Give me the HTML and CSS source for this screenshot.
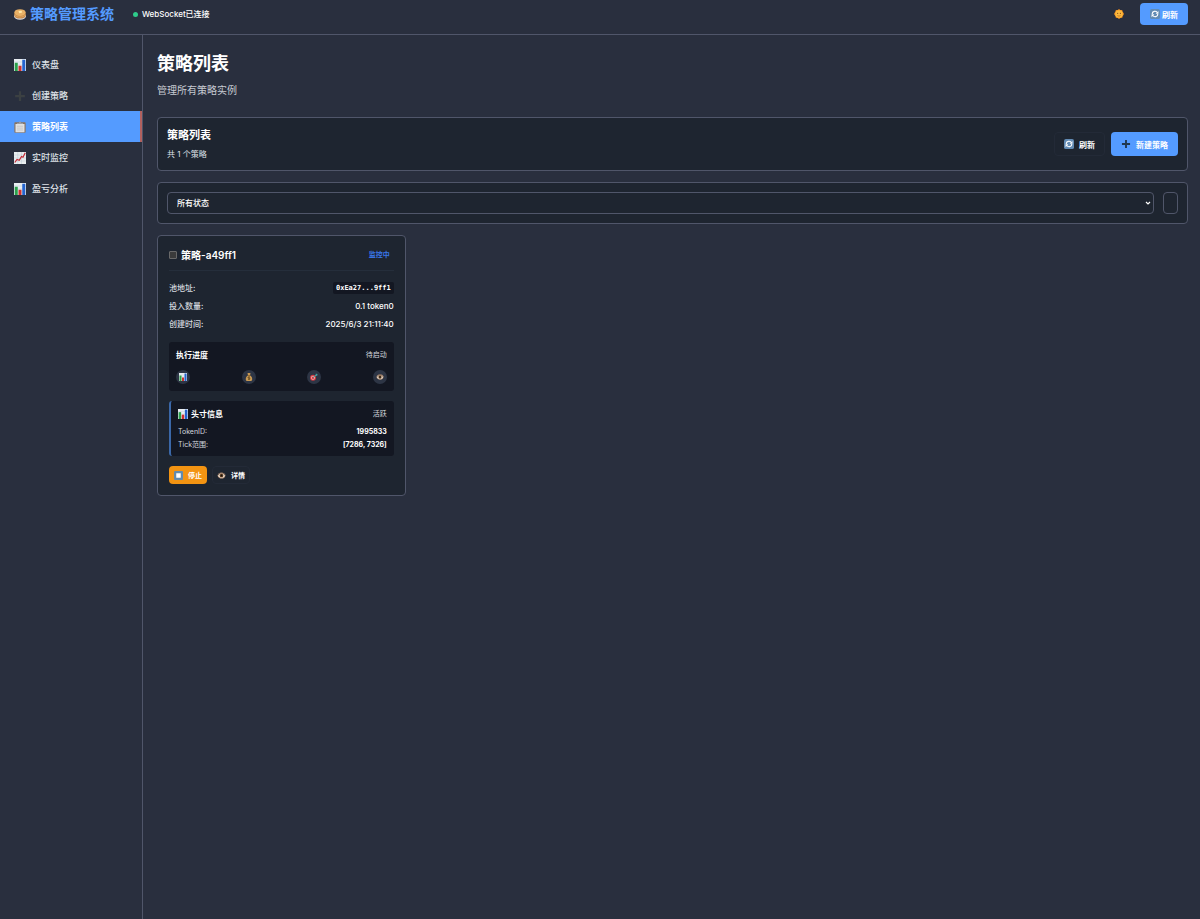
FILE: index.html
```html
<!DOCTYPE html>
<html lang="zh-CN">
<head>
  <meta charset="UTF-8">
  <meta name="viewport" content="width=device-width, initial-scale=1.0">
  <title>策略管理系统</title>
  <link rel="stylesheet" href="styles.css">
</head>
<body>
  <svg class="sprite" aria-hidden="true">
    <symbol id="chart" viewBox="0 0 16 16">
      <path fill="#e9eef2" d="M0 0h16v16H0z"/>
      <path stroke="#b8c6d2" stroke-width=".6" d="M0 4h16M0 8h16M0 12h16"/>
      <path fill="#2ba14b" d="M1 5h4v11H1z"/>
      <path fill="#cf3030" d="M6 9h4v7H6z"/>
      <path fill="#2464cf" d="M11 1h4v15h-4z"/>
    </symbol>
    <symbol id="trend" viewBox="0 0 16 16">
      <path fill="#e9eef0" d="M0 0h16v16H0z"/>
      <path stroke="#b8c6d2" stroke-width=".6" d="M0 4h16M0 8h16M0 12h16M5 0v16M10 0v16"/>
      <path fill="none" stroke="#c52b35" stroke-width="1.600" d="M1 14l3-4 3 1 3-5 2 1 3-6"/>
    </symbol>
    <symbol id="clipboard" viewBox="0 0 16 16">
      <rect x=".5" y="1.500" width="15" height="14" rx="1" fill="#8a7460"/>
      <path fill="#e0e0e0" d="M2 4h12v11H2z"/>
      <path stroke="#c2c2c4" d="M4 7h8M4 9.500h8M4 12h8"/>
      <path fill="#9b9ea4" d="M4 4V2.500h2.500L7 .5h2l.5 2H12V4z"/>
    </symbol>
    <symbol id="plus" viewBox="0 0 16 16">
      <path fill="currentColor" d="M6.500 1.500h3v5h5v3h-5v5h-3v-5h-5v-3h5z"/>
    </symbol>
    <symbol id="pancakes" viewBox="0 0 16 16">
      <ellipse cx="8" cy="11" rx="8" ry="4.500" fill="#d9dbe0"/>
      <path fill="#c48545" d="M.5 6h15v4c0 5.500-15 5.500-15 0z"/>
      <path fill="none" stroke="#e3ab62" stroke-width="1.200" d="M1 9c1 4 13 4 14 0"/>
      <ellipse cx="8" cy="6" rx="7.500" ry="4.500" fill="#e9b166"/>
      <path fill="#ffe9a8" d="M6 4l4-.5 1 2.500-4 1z"/>
    </symbol>
    <symbol id="sun" viewBox="0 0 16 16">
      <path fill="#ef8d20" d="M8 0l2 1.500 3 0 .8 2.500L16 8l-2 3-.8 3-3 .2L8 16l-2-1.800-3-.2-.8-3L0 8l2.200-4L3 1.500h3z"/>
      <circle cx="8" cy="8" r="6" fill="#fbb93c"/>
      <circle cx="5.800" cy="6.800" r="1" fill="#87471a"/>
      <circle cx="10.200" cy="6.800" r="1" fill="#87471a"/>
      <path fill="none" stroke="#a7541d" d="M5.500 10.500q2.500 2 5 0"/>
    </symbol>
    <symbol id="refresh" viewBox="0 0 16 16">
      <rect x="0" y="0" width="16" height="16" rx="3" fill="#628bb4"/>
      <path fill="none" stroke="#fff" stroke-width="1.800" d="M3.500 8c0-5 6-5.500 8-2.500M12.500 8c0 5-6 5.500-8 2.500"/>
      <path fill="#fff" d="M13.500 3v4.500H9zM2.500 13V8.500H7z"/>
    </symbol>
    <symbol id="stop" viewBox="0 0 16 16">
      <rect x="0" y="0" width="16" height="16" rx="2" fill="#638bad"/>
      <path fill="#fff" d="M4 4h8v8H4z"/>
    </symbol>
    <symbol id="money" viewBox="0 0 16 16">
      <path fill="#c99a55" d="M5 0h6l-1 5c5 2 6 10.500 2 11H4C0 15.500 1 7 6 5z"/>
      <path stroke="#79511e" stroke-width="1.200" d="M5.500 5h5"/>
      <path fill="none" stroke="#5b4218" stroke-width="1.400" d="M10 8.500c-1-1-4-1-4 .5s4 1 4 2.500-3 1.500-4 .5M8 7v7"/>
    </symbol>
    <symbol id="target" viewBox="0 0 16 16">
      <circle cx="6" cy="9.500" r="6" fill="#d3373f"/>
      <circle cx="6" cy="9.500" r="3.800" fill="#efc6c6"/>
      <circle cx="6" cy="9.500" r="2.500" fill="#d3373f"/>
      <path stroke="#41a6a6" stroke-width="2" d="M6.500 9l6.500-5.500"/>
      <path fill="#41a6a6" d="M11 4.500l1-4 1.500 2 2.500 1-3 2.500z"/>
    </symbol>
    <symbol id="eye" viewBox="0 0 16 16">
      <path fill="#c9a68a" d="M1 8c1-7 12-7 14-1 0 8-12 9-14 1z"/>
      <path fill="#f1eeea" d="M2.500 8.500c2-4.500 9-4.500 11 0-2 4-9 4-11 0z"/>
      <circle cx="8" cy="8" r="3.300" fill="#65401f"/>
      <circle cx="8" cy="8" r="1.600" fill="#161311"/>
      <path fill="none" stroke="#46362e" d="M2 7c3-5 9-5 12 0"/>
    </symbol>
  </svg>

  <header class="header">
    <div class="logo">
      <svg class="icon icon-lg"><use href="#pancakes"/></svg>
      <span>策略管理系统</span>
    </div>
    <div class="connection"><span class="dot"></span>WebSocket已连接</div>
    <div class="header-actions">
      <button class="theme-toggle" aria-label="切换主题"><svg class="icon"><use href="#sun"/></svg></button>
      <button class="btn btn-primary btn-header"><svg class="icon"><use href="#refresh"/></svg>刷新</button>
    </div>
  </header>

  <div class="layout">
    <nav class="sidebar">
      <a class="nav-item" href="#dashboard"><svg class="icon icon-lg"><use href="#chart"/></svg>仪表盘</a>
      <a class="nav-item" href="#create"><svg class="icon icon-lg plus-dim"><use href="#plus"/></svg>创建策略</a>
      <a class="nav-item active" href="#list"><svg class="icon icon-lg"><use href="#clipboard"/></svg>策略列表</a>
      <a class="nav-item" href="#monitor"><svg class="icon icon-lg"><use href="#trend"/></svg>实时监控</a>
      <a class="nav-item" href="#analysis"><svg class="icon icon-lg"><use href="#chart"/></svg>盈亏分析</a>
    </nav>

    <main class="content">
      <h1 class="page-title">策略列表</h1>
      <p class="page-subtitle">管理所有策略实例</p>

      <section class="panel toolbar">
        <div>
          <h2 class="toolbar-title">策略列表</h2>
          <p class="toolbar-count">共 1 个策略</p>
        </div>
        <div class="toolbar-actions">
          <button class="btn btn-ghost"><svg class="icon"><use href="#refresh"/></svg>刷新</button>
          <button class="btn btn-primary"><svg class="icon plus-dark"><use href="#plus"/></svg>新建策略</button>
        </div>
      </section>

      <section class="panel filters">
        <select class="field status" aria-label="状态筛选">
          <option>所有状态</option>
        </select>
        <input class="field search" type="text" aria-label="搜索策略">
      </section>

      <div class="strategy-grid">
        <article class="card">
          <div class="card-header">
            <input class="check" type="checkbox" id="strategy-a49ff1">
            <label class="card-title" for="strategy-a49ff1">策略-a49ff1</label>
            <span class="badge">监控中</span>
          </div>

          <dl class="details">
            <div class="row"><dt>池地址:</dt><dd class="address">0xEa27...9ff1</dd></div>
            <div class="row"><dt>投入数量:</dt><dd>0.1 token0</dd></div>
            <div class="row"><dt>创建时间:</dt><dd>2025/6/3 21:11:40</dd></div>
          </dl>

          <div class="box">
            <div class="box-header"><h3>执行进度</h3><span>待启动</span></div>
            <div class="steps">
              <span class="step"><svg><use href="#chart"/></svg></span>
              <span class="step"><svg><use href="#money"/></svg></span>
              <span class="step"><svg><use href="#target"/></svg></span>
              <span class="step"><svg><use href="#eye"/></svg></span>
            </div>
          </div>

          <div class="box position">
            <div class="box-header">
              <h3><svg class="icon"><use href="#chart"/></svg>头寸信息</h3>
              <span>活跃</span>
            </div>
            <dl class="position-info">
              <div class="row"><dt>TokenID:</dt><dd>1995833</dd></div>
              <div class="row"><dt>Tick范围:</dt><dd>[7286, 7326]</dd></div>
            </dl>
          </div>

          <div class="card-actions">
            <button class="btn btn-sm btn-warning"><svg class="icon"><use href="#stop"/></svg>停止</button>
            <button class="btn btn-sm btn-ghost"><svg class="icon"><use href="#eye"/></svg>详情</button>
          </div>
        </article>
      </div>
    </main>
  </div>
</body>
</html>
```
FILE: styles.css
```css
* {
  box-sizing: border-box;
  margin: 0;
  padding: 0;
}

body {
  display: flex;
  flex-direction: column;
  min-height: 100vh;
  background: #292f3e;
  color: #fff;
  font-family: Inter, "Noto Sans CJK SC", sans-serif;
  font-size: 8px;
  line-height: 12px;
}

button,
input,
select {
  font-family: inherit;
}

.sprite {
  display: none;
}

.icon {
  width: 10px;
  height: 10px;
  flex-shrink: 0;
}

.icon-lg {
  width: 12px;
  height: 12px;
}

.plus-dim {
  color: #3b4042;
}

.plus-dark {
  color: #20384f;
}

/* Header */
.header {
  display: flex;
  align-items: center;
  height: 35px;
  padding: 0 12px 6px 14px;
  border-bottom: 1px solid #50566a;
}

.logo {
  display: flex;
  align-items: center;
  gap: 4px;
  color: #549bff;
  font-size: 14px;
  font-weight: 700;
  line-height: 20px;
}

.connection {
  display: flex;
  align-items: center;
  gap: 4px;
  margin-left: 19px;
  font-weight: 500;
}

.dot {
  width: 5px;
  height: 5px;
  border-radius: 50%;
  background: #2ecc8b;
}

.header-actions {
  display: flex;
  align-items: center;
  gap: 16px;
  margin-left: auto;
}

.theme-toggle {
  display: flex;
  border: none;
  background: none;
  cursor: pointer;
}

/* Buttons */
.btn {
  display: flex;
  align-items: center;
  gap: 5px;
  height: 24px;
  padding: 0 9px;
  border: 1px solid transparent;
  border-radius: 4px;
  color: #fff;
  font-size: 8px;
  font-weight: 700;
  cursor: pointer;
}

.btn-header {
  gap: 2px;
  height: 22px;
}

.btn-primary {
  background: #549bff;
}

.btn-ghost {
  background: #1e2530;
  border-color: #232a37;
}

.btn-warning {
  background: #f39412;
}

.btn-sm {
  height: 18px;
  padding: 0 4px;
  font-size: 7px;
}

.btn-sm .icon {
  width: 9px;
  height: 9px;
}

/* Sidebar */
.layout {
  display: flex;
  flex: 1;
}

.sidebar {
  width: 143px;
  flex-shrink: 0;
  padding-top: 14px;
  border-right: 1px solid #50566a;
}

.nav-item {
  display: flex;
  align-items: center;
  gap: 6px;
  height: 31px;
  padding-left: 14px;
  color: #dfe2e8;
  font-size: 9px;
  font-weight: 500;
  text-decoration: none;
}

.nav-item.active {
  background: #549bff;
  border-right: 2px solid #b2615f;
  color: #fff;
  font-weight: 700;
}

/* Content */
.content {
  flex: 1;
  padding: 14px 12px 14px 14px;
}

.page-title {
  font-size: 18px;
  line-height: 30px;
}

.page-subtitle {
  margin-top: 4px;
  margin-bottom: 20px;
  color: #c6cad2;
  font-size: 10px;
  line-height: 14px;
}

.panel,
.card {
  background: #1e2530;
  border: 1px solid #50566a;
  border-radius: 4px;
}

.panel {
  display: flex;
  align-items: center;
  padding: 9px;
  margin-bottom: 11px;
}

.toolbar {
  justify-content: space-between;
}

.toolbar-title {
  font-size: 11px;
  line-height: 16px;
}

.toolbar-count {
  margin-top: 4px;
  color: #dfe2e8;
  line-height: 14px;
}

.toolbar-actions {
  display: flex;
  gap: 6px;
}

.filters {
  gap: 9px;
}

.field {
  flex: 1;
  height: 22px;
  padding: 0 9px;
  background: #1e2530;
  border: 1px solid #50566a;
  border-radius: 4px;
  color: #fff;
  font-size: 8px;
  font-weight: 500;
}

.status {
  appearance: none;
  background-image: url("data:image/svg+xml,%3Csvg xmlns='http://www.w3.org/2000/svg' viewBox='0 0 6 6'%3E%3Cpath d='M1 2l2 2 2-2' fill='none' stroke='white' stroke-width='1.2'/%3E%3C/svg%3E");
  background-repeat: no-repeat;
  background-position: right 2px center;
  background-size: 6px 6px;
}

.search {
  flex: 0 0 15px;
  padding: 0 5px;
  width: 15px;
}

/* Strategy card */
.strategy-grid {
  display: grid;
  grid-template-columns: repeat(auto-fill, minmax(220px, 1fr));
  gap: 12px;
}

.card {
  padding: 11px;
}

.card-header {
  display: flex;
  align-items: center;
  gap: 4px;
  height: 24px;
  padding-bottom: 8px;
  border-bottom: 1px solid #252e3b;
}

.check {
  appearance: none;
  width: 8px;
  height: 8px;
  background: #3b3b3b;
  border: 1px solid #696969;
  border-radius: 1px;
}

.card-title {
  font-size: 10px;
  font-weight: 600;
}

.badge {
  margin-left: auto;
  padding: 0 4px;
  color: #3976e8;
  font-size: 7px;
  font-weight: 700;
}

.details {
  display: grid;
  gap: 4px;
  margin: 10px 0 11px;
}

.row {
  display: flex;
  align-items: center;
  justify-content: space-between;
  height: 14px;
}

.row dt {
  color: #d4d8df;
  font-weight: 500;
}

.row dd {
  font-weight: 500;
}

.row .address {
  padding: 0 3px;
  background: #131722;
  border-radius: 2px;
  font-family: "DejaVu Sans Mono", monospace;
  font-size: 7px;
  font-weight: 700;
}

.box {
  margin-bottom: 10px;
  padding: 7px;
  background: #131722;
  border-radius: 3px;
}

.box-header {
  display: flex;
  justify-content: space-between;
  color: #d4d8df;
  font-size: 7px;
}

.box-header h3 {
  display: flex;
  align-items: center;
  gap: 3px;
  color: #fff;
  font-size: 8px;
}

.steps {
  display: flex;
  justify-content: space-between;
  margin-top: 9px;
}

.step {
  display: grid;
  place-items: center;
  width: 14px;
  height: 14px;
  background: #2d3545;
  border-radius: 50%;
}

.step svg {
  width: 8px;
  height: 8px;
}

.position {
  padding: 7px 7px 5px;
  border-left: 2px solid #3b68a8;
}

.position-info {
  margin-top: 5px;
  font-size: 7px;
}

.position-info .row {
  height: 13px;
}

.position-info dt {
  font-weight: 400;
}

.position-info dd {
  font-weight: 700;
}

.card-actions {
  display: flex;
  gap: 5px;
}
```
